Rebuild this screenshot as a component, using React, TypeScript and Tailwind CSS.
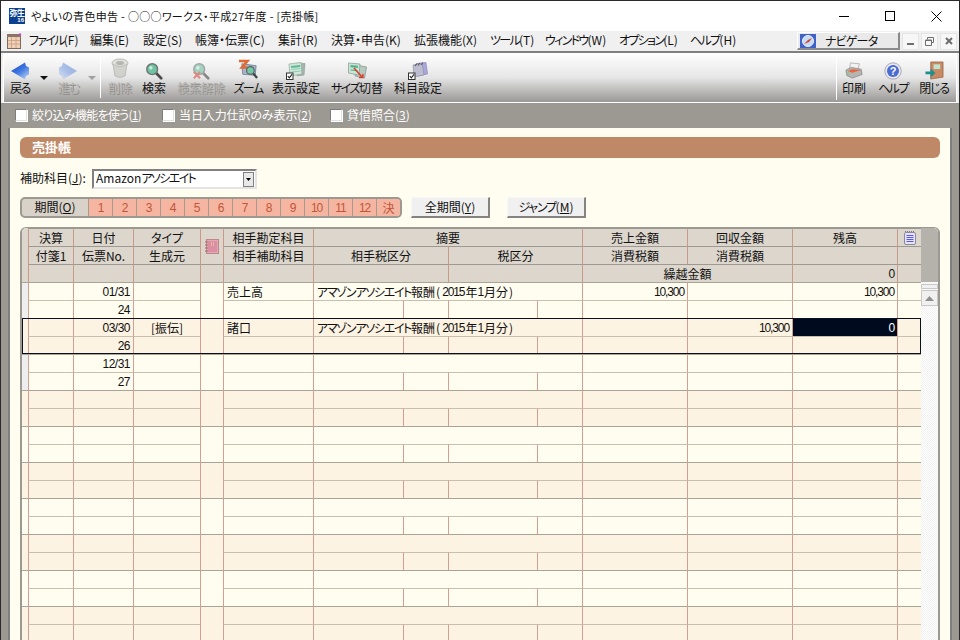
import React from "react";

const U = ({ children }: { children: React.ReactNode }) => <span className="underline">{children}</span>;
const K = ({ children }: { children: React.ReactNode }) => <span className="tracking-[-1.3px]">{children}</span>;
const M = ({ children }: { children: React.ReactNode }) => <span className="tracking-[-1.7px]">{children}</span>;

function Logo() {
  return (
    <div className="w-4 h-4 bg-[#0b3f8f] flex flex-col items-center justify-start leading-none text-white overflow-hidden">
      <span className="text-[8px] leading-[9px] tracking-[-0.5px] font-bold">弥生</span>
      <span className="text-[6px] leading-[7px] self-end pr-[1px] font-['Liberation_Sans',sans-serif] font-bold">16</span>
    </div>
  );
}

function BackIcon({ off }: { off?: boolean }) {
  return (
    <svg width="18" height="18" viewBox="0 0 18 18" className={off ? "opacity-40 -scale-x-100" : ""}>
      <defs>
        <linearGradient id={off ? "ag2" : "ag"} x1="0.1" y1="0" x2="0.9" y2="1">
          <stop offset="0" stopColor="#1a44c4" />
          <stop offset="0.5" stopColor="#3f78e2" />
          <stop offset="1" stopColor="#bcd4f6" />
        </linearGradient>
      </defs>
      <path d="M0 9 L14 0.5 L15 4 L18 5.5 L18 12.5 L15 14 L14 17.5Z" fill={`url(#${off ? "ag2" : "ag"})`} />
    </svg>
  );
}

function Caret({ off }: { off?: boolean }) {
  return (
    <svg width="8" height="4" viewBox="0 0 8 4" className="mt-[23px]">
      <path d="M0 0H8L4 4Z" fill={off ? "#9f9f9f" : "#111"} />
    </svg>
  );
}

function TrashIcon() {
  return (
    <svg width="20" height="22" viewBox="0 0 20 22" className="opacity-70">
      <ellipse cx="10" cy="5" rx="8" ry="4" fill="#d7d7d2" stroke="#a3a39d" />
      <path d="M3 6 L5 18 Q10 21 15 18 L17 6 Q10 11 3 6Z" fill="#c6c6c0" stroke="#a8a8a2" />
      <ellipse cx="10" cy="5" rx="4" ry="2" fill="#9b9b96" />
    </svg>
  );
}

function Magnifier({ off }: { off?: boolean }) {
  return (
    <svg width="18" height="18" viewBox="0 0 20 20" className={off ? "opacity-60" : ""}>
      <path d="M12 12 L18 18" stroke="#4a4a4a" strokeWidth="3" strokeLinecap="round" />
      <circle cx="8" cy="8" r="6" fill="#6fc3a3" stroke="#6d7773" strokeWidth="1.6" />
      <circle cx="6.5" cy="6.5" r="2" fill="#c7ecdc" />
      {off && <path d="M2 11 L9 18 M9 11 L2 18" stroke="#d84a3a" strokeWidth="2.2" />}
    </svg>
  );
}

function ZoomIcon() {
  return (
    <svg width="21" height="21" viewBox="0 0 22 22">
      <path d="M4 5 L19 7 L18 17 L5 16Z" fill="#aab4c8" stroke="#7f88a0" />
      <path d="M1 2 H10 L4 9 H10" fill="none" stroke="#e06a35" strokeWidth="2.6" />
      <path d="M15 14 L20 20" stroke="#3e4a46" strokeWidth="2.4" />
      <circle cx="13" cy="12" r="4" fill="#74c8a8" stroke="#55625e" strokeWidth="1.2" />
    </svg>
  );
}

function CardIcon() {
  return (
    <svg width="20" height="18" viewBox="0 0 20 18">
      <path d="M11 1 L19 1.5 L18 13 L11 14Z" fill="#a6b4ad" stroke="#8a9a92" strokeWidth="0.6" />
      <path d="M3 2 L15 0.5 L16 12 L4 14Z" fill="#cfe8da" stroke="#93a99c" strokeWidth="0.7" />
      <path d="M5 4 L14 3 L14.2 5 L5.2 6Z" fill="#5fb895" />
      <path d="M5.4 7.5 L14.4 6.5 M5.6 10 L14.6 9" stroke="#8fcdb2" strokeWidth="1.2" />
      <rect x="0.5" y="11" width="6.5" height="6.5" fill="#fff" stroke="#333" />
      <path d="M1.8 14 L3.3 15.8 L6 12.4" fill="none" stroke="#222" strokeWidth="1.1" />
    </svg>
  );
}

function SizeIcon() {
  return (
    <svg width="19" height="18" viewBox="0 0 19 18">
      <path d="M8 3 L18.5 5 L16.5 16 L7 14Z" fill="#b8cabf" stroke="#7d8f85" strokeWidth="0.7" />
      <path d="M0.5 1 L12 2 L11 13 L0.5 11Z" fill="#c9e6d6" stroke="#7d9a8c" strokeWidth="0.7" />
      <path d="M2.5 3 L10 3.7 L9.7 6 L2.5 5.3Z" fill="#55b08c" />
      <path d="M2.5 8 L9.5 8.6" stroke="#55b08c" strokeWidth="1.2" />
      <path d="M6 6 L14 15 M11 15.6 H14.8 V12" fill="none" stroke="#d8402c" strokeWidth="1.5" />
    </svg>
  );
}

function SubjectIcon() {
  return (
    <svg width="20" height="18" viewBox="0 0 20 18">
      <path d="M9 1.5 L18 0.5 L19.5 12 L10 14Z" fill="#a9a6dc" stroke="#8582b0" strokeWidth="0.6" />
      <path d="M5 3 L14 1 L16 13 L6 15Z" fill="#bdbcd0" stroke="#8a8a9a" strokeWidth="0.6" />
      <path d="M7 4 L9 1.5 M10 3.5 L12 1 M13 3 L15 0.5" stroke="#55555f" strokeWidth="1.1" />
      <rect x="0.5" y="11" width="6.5" height="6.5" fill="#fff" stroke="#333" />
      <path d="M1.8 14 L3.3 15.8 L6 12.4" fill="none" stroke="#222" strokeWidth="1.1" />
    </svg>
  );
}

function PrintIcon() {
  return (
    <svg width="20" height="18" viewBox="0 0 22 20">
      <path d="M7 1 L17 2 L15 9 L6 8Z" fill="#f2f2f2" stroke="#9a9a9a" strokeWidth="0.7" />
      <path d="M2 9 L8 6 L19 8 L20 14 L9 18 L3 15Z" fill="#b5b5b5" stroke="#7a7a7a" strokeWidth="0.7" />
      <path d="M4 10 L9 12 L19 9 L9 8Z" fill="#e8663d" />
      <circle cx="4.5" cy="13" r="1.2" fill="#7fd36d" />
    </svg>
  );
}

function HelpIcon() {
  return (
    <svg width="18" height="18" viewBox="0 0 18 18">
      <circle cx="9" cy="9" r="8.2" fill="#e8e8f0" stroke="#9a9aa8" strokeWidth="0.8" />
      <circle cx="9" cy="9" r="6" fill="#4a6bd0" />
      <text x="9" y="13" textAnchor="middle" fontSize="11" fontWeight="700" fill="#fff" fontFamily="Liberation Sans">?</text>
    </svg>
  );
}

function CloseIcon() {
  return (
    <svg width="19" height="19" viewBox="0 0 20 20">
      <path d="M6 1 H19 V17 L6 19Z" fill="#c98a62" stroke="#8c5c3e" strokeWidth="0.7" />
      <rect x="9" y="3.5" width="7" height="5" fill="#bfe3cf" />
      <path d="M0.5 11 H6 V8 L11 12.5 L6 17 V14 H0.5Z" fill="#1d8f8f" />
    </svg>
  );
}

function BookIcon() {
  return (
    <svg width="14" height="15" viewBox="0 0 14 15">
      <rect x="1.5" y="0.5" width="12" height="14" fill="#e6a9b4" stroke="#b98a8a" />
      <rect x="3" y="2" width="9" height="11" fill="#dc8fa4" />
      <path d="M0 3 H3 M0 6 H3 M0 9 H3 M0 12 H3" stroke="#9e6b6b" />
      <path d="M6 4 H10 M6 6 H10" stroke="#f4e08a" strokeDasharray="1 1" />
    </svg>
  );
}

function NoteIcon() {
  return (
    <svg width="12" height="14" viewBox="0 0 12 14">
      <rect x="0.5" y="1.5" width="11" height="12" rx="1.5" fill="#e6e2fb" stroke="#8a8a98" />
      <path d="M1 0.5 H11" stroke="#777" strokeDasharray="1 1" />
      <path d="M2.5 4.5 H9.5 M2.5 6.5 H9.5 M2.5 8.5 H9.5 M2.5 10.5 H9.5" stroke="#5a5ae0" />
    </svg>
  );
}

function NavIcon() {
  return (
    <svg width="16" height="14" viewBox="0 0 16 14">
      <rect width="16" height="14" fill="#3f62c8" />
      <circle cx="8" cy="7" r="5.5" fill="#c4dcf4" stroke="#eaf2fb" />
      <path d="M4 10 L8 6 L12 4 L9 8Z" fill="#d8402c" />
    </svg>
  );
}

function MenuIcon() {
  return (
    <svg width="16" height="16" viewBox="0 0 16 16">
      <rect x="1.5" y="1.5" width="13" height="14" fill="#ecd3b8" stroke="#7d6a58" />
      <rect x="1" y="1" width="14" height="3" fill="#8a7466" />
      <path d="M5.5 4 V15 M10 4 V15 M2 7.5 H14 M2 11 H14" stroke="#cf9a80" strokeWidth="0.8" />
      <circle cx="14" cy="1.5" r="1.2" fill="#c04ec0" />
    </svg>
  );
}

function Tool({ w, label, off, children }: { w: string; label: React.ReactNode; off?: boolean; children: React.ReactNode }) {
  return (
    <div className={`${w} shrink-0 flex flex-col items-center`}>
      <div className="h-[27px] flex items-end justify-center">{children}</div>
      <div className={`text-[12px] leading-[15px] whitespace-nowrap ${off ? "text-[#b4b2ae] [text-shadow:1px_1px_0_#8f8d8a]" : "text-[#101010]"}`}>
        {label}
      </div>
    </div>
  );
}

function Check({ w, label }: { w: string; label: React.ReactNode }) {
  return (
    <div className={`${w} shrink-0 flex items-center`}>
      <div className="w-3 h-3 -ml-px bg-white border border-t-[#7d7d7d] border-l-[#7d7d7d] border-r-[#e0e0e0] border-b-[#e0e0e0] shadow-[1px_1px_0_#fff]" />
      <span className="ml-[5px] text-white text-[12px] whitespace-nowrap">{label}</span>
    </div>
  );
}

function Btn({ ml, children }: { ml: string; children: React.ReactNode }) {
  return (
    <div className={`${ml} w-[79px] bg-[#f0f0f0] border border-t-[#f8f8f8] border-l-[#f8f8f8] border-r-2 border-b-2 border-r-[#85837f] border-b-[#85837f] flex items-center justify-center whitespace-nowrap pb-[1px]`}>
      {children}
    </div>
  );
}

const GRID =
  "grid grid-cols-[6px_45px_60px_67px_23px_90px_90px_45px_89px_45px_105px_105px_105px_24px]";

function H({ span, cls, children }: { span?: string; cls?: string; children?: React.ReactNode }) {
  return (
    <div className={`${span ?? ""} ${cls ?? "justify-center"} border-l border-t border-l-[#c9998c] border-t-[#9c9892] flex items-center whitespace-nowrap`}>
      {children}
    </div>
  );
}

function D({ span, top, cls, children }: { span?: string; top?: boolean; cls?: string; children?: React.ReactNode }) {
  return (
    <div
      className={`${span ?? ""} ${cls ?? ""} border-l border-t border-l-[#d29f92] ${top ? "border-t-[#a8a498]" : "border-t-[#c8bfb0]"} flex items-center whitespace-nowrap overflow-hidden`}
    >
      {children}
    </div>
  );
}

const Num = ({ children }: { children: React.ReactNode }) => (
  <span className="font-['Liberation_Sans',sans-serif] text-[12px] tracking-[-1.1px]">{children}</span>
);
const DateNum = ({ children }: { children: React.ReactNode }) => (
  <span className="font-['Liberation_Sans',sans-serif] text-[12px] tracking-[-0.5px]">{children}</span>
);

const SUM = (
  <>
    <K>アマゾンアソシエイト</K>報酬<span className="ml-[1px] mr-[2px]">(</span><Num>2015</Num><span className="ml-[1px]">年</span><Num>1</Num><span className="ml-[1px]">月分</span><span className="ml-[1px]">)</span>
  </>
);

const rows = [
  { date: "01/31", no: "24", type: "", acc: "売上高", sum: true, sales: "10,300", coll: "", bal: "10,300", gutter: "bg-[#eeeeee]" },
  { date: "03/30", no: "26", type: "[振伝]", acc: "諸口", sum: true, sales: "", coll: "10,300", bal: "0", sel: true },
  { date: "12/31", no: "27", type: "", acc: "", sum: false, sales: "", coll: "", bal: "", gutter: "bg-[#eeeeee]" },
  ...Array.from({ length: 7 }, () => ({ date: "", no: "", type: "", acc: "", sum: false, sales: "", coll: "", bal: "" })),
];

const R = "justify-end pr-[3px]";

function Group({ r, i }: { r: any; i: number }) {
  const band = i % 2 === 1 ? "bg-[#fdf3e2]" : "bg-[#fffdf0]";
  return (
    <div className={`relative ${GRID} grid-rows-[18px_18px] ${band}`}>
      <div className={`row-span-2 border-t border-t-[#a8a498] ${r.gutter ?? ""}`} />
      <D top />
      <D top cls={R}><DateNum>{r.date}</DateNum></D>
      <D top cls="justify-center">{r.type}</D>
      <D top span="row-span-2" />
      <D top cls="pl-[3px]">{r.acc}</D>
      <D top span="col-span-4" cls="pl-[3px]">{r.sum ? SUM : null}</D>
      <D top cls={R}><Num>{r.sales}</Num></D>
      <D top cls={R}><Num>{r.coll}</Num></D>
      <D top cls={`${R} ${r.sel ? "bg-[#000a1e] text-white" : ""}`}><Num>{r.bal}</Num></D>
      <D top />
      <D />
      <D cls={R}><DateNum>{r.no}</DateNum></D>
      <D />
      <D />
      <D />
      <D />
      <D />
      <D />
      <D />
      <D />
      <D />
      <D />
      {r.sel && <div className="absolute inset-0 border border-[#0a1020] pointer-events-none" />}
    </div>
  );
}

function MenuItem({ w, children }: { w: string; children: React.ReactNode }) {
  return <div className={`${w} shrink-0 whitespace-nowrap pb-[2px]`}>{children}</div>;
}

export default function App() {
  return (
    <div className="w-[960px] h-[640px] overflow-hidden flex flex-col bg-[#9c9892] border-x border-t border-[#2a2a2a] font-['Noto_Sans_CJK_JP',sans-serif] text-[12px] text-[#111] [font-feature-settings:'palt']">
      {/* title bar */}
      <div className="h-[30px] shrink-0 bg-white flex items-center">
        <div className="ml-[8px] -mt-[1px]"><Logo /></div>
        <div className="ml-[6px] text-[11px] tracking-[0.3px] whitespace-nowrap">やよいの青色申告 - ○○○ワークス・平成27年度 - [売掛帳]</div>
        <div className="ml-auto flex h-full">
          <div className="w-[46px] flex items-center justify-center"><div className="w-[10px] h-px bg-black" /></div>
          <div className="w-[46px] flex items-center justify-center"><div className="w-[10px] h-[10px] border border-black" /></div>
          <div className="w-[46px] flex items-center justify-center">
            <svg width="11" height="11" viewBox="0 0 11 11"><path d="M0.5 0.5 L10.5 10.5 M10.5 0.5 L0.5 10.5" stroke="#000" /></svg>
          </div>
        </div>
      </div>
      {/* menu bar */}
      <div className="h-[20px] shrink-0 bg-[#f0f0f0] flex items-center">
        <div className="ml-[5px] w-[23px]"><MenuIcon /></div>
        <MenuItem w="w-[61px]"><M>ファイル</M>(F)</MenuItem>
        <MenuItem w="w-[53px]">編集(E)</MenuItem>
        <MenuItem w="w-[52px]">設定(S)</MenuItem>
        <MenuItem w="w-[83px]">帳簿・伝票(C)</MenuItem>
        <MenuItem w="w-[53px]">集計(R)</MenuItem>
        <MenuItem w="w-[83px]">決算・申告(K)</MenuItem>
        <MenuItem w="w-[76px]">拡張機能(X)</MenuItem>
        <MenuItem w="w-[55px]"><M>ツール</M>(T)</MenuItem>
        <MenuItem w="w-[74px]"><M>ウィンドウ</M>(W)</MenuItem>
        <MenuItem w="w-[71px]"><M>オプション</M>(L)</MenuItem>
        <MenuItem w="w-[70px]"><M>ヘルプ</M>(H)</MenuItem>
        <div className="ml-auto flex items-center">
          <div className="w-[103px] h-[18px] bg-[#e9e9e9] border-t border-l border-t-white border-l-white border-r-2 border-b-2 border-r-[#8a8a8a] border-b-[#8a8a8a] flex items-center">
            <div className="ml-[2px]"><NavIcon /></div>
            <span className="ml-[9px] tracking-[-0.8px]">ナビゲータ</span>
          </div>
          <div className="ml-[2px] w-[17px] h-[17px] bg-[#f7f7f7] border border-[#e4e4e4] flex items-end justify-center pb-[4px]"><div className="w-[7px] h-[2px] bg-[#6e6e6e]" /></div>
          <div className="ml-[2px] w-[17px] h-[17px] bg-[#f7f7f7] border border-[#e4e4e4] flex items-center justify-center">
            <svg width="9" height="9" viewBox="0 0 9 9"><path d="M2.5 2.5 V0.5 H8.5 V5.5 H6.5 M0.5 3 H6.5 V8.5 H0.5Z M0.5 3.5 H6.5" fill="none" stroke="#6e6e6e" /></svg>
          </div>
          <div className="ml-[2px] w-[17px] h-[17px] bg-[#f7f7f7] border border-[#e4e4e4] flex items-center justify-center">
            <svg width="8" height="8" viewBox="0 0 8 8"><path d="M1 1 L7 7 M7 1 L1 7" stroke="#6e6e6e" strokeWidth="2" /></svg>
          </div>
          <div className="w-[2px]" />
        </div>
      </div>
      {/* toolbar */}
      <div className="h-[2px] shrink-0 bg-[#7f7f7f]" />
      <div className="h-[50px] shrink-0 bg-[#ededed] px-[2px]">
        <div className="h-full flex border-l border-r border-b border-white bg-gradient-to-b from-white via-[#e6e6e6] to-[#9b9997]">
          <Tool w="w-[32px]" label={<span className="tracking-[-1.5px]">戻る</span>}><BackIcon /></Tool>
          <div className="w-[16px] shrink-0 flex justify-center"><Caret /></div>
          <Tool w="w-[32px]" label={<span className="tracking-[-1.5px]">進む</span>} off><BackIcon off /></Tool>
          <div className="w-[16px] shrink-0 flex justify-center"><Caret off /></div>
          <div className="w-px shrink-0 bg-white my-[4px]" />
          <Tool w="w-[38px]" label="削除" off><TrashIcon /></Tool>
          <Tool w="w-[30px]" label="検索"><Magnifier /></Tool>
          <Tool w="w-[64px]" label="検索解除" off><Magnifier off /></Tool>
          <Tool w="w-[30px]" label={<span className="tracking-[-1.5px]">ズーム</span>}><ZoomIcon /></Tool>
          <Tool w="w-[66px]" label="表示設定"><CardIcon /></Tool>
          <Tool w="w-[56px]" label={<><span className="tracking-[-1.5px]">サイズ</span>切替</>}><SizeIcon /></Tool>
          <Tool w="w-[66px]" label="科目設定"><SubjectIcon /></Tool>
          <div className="flex-1" />
          <div className="w-px shrink-0 bg-white my-[2px]" />
          <Tool w="w-[34px]" label="印刷"><PrintIcon /></Tool>
          <Tool w="w-[44px]" label={<span className="tracking-[-1.5px]">ヘルプ</span>}><HelpIcon /></Tool>
          <Tool w="w-[38px]" label={<span className="tracking-[-1.3px]">閉じる</span>}><CloseIcon /></Tool>
          <div className="w-[3px] shrink-0" />
        </div>
      </div>
      {/* options */}
      <div className="h-[25px] shrink-0 bg-[#9c9892] flex items-center pl-[15px] pb-[1px]">
        <Check w="w-[147px]" label={<span className="tracking-[-0.7px]">絞り込み機能を使う(<U>1</U>)</span>} />
        <Check w="w-[168px]" label={<span className="tracking-[-0.1px]">当日入力仕訳のみ表示(<U>2</U>)</span>} />
        <Check w="w-[90px]" label={<>貸借照合(<U>3</U>)</>} />
      </div>
      {/* panel */}
      <div className="flex-1 min-h-0 ml-[7px] mr-[7px] border-x-2 border-[#7f7f7f] bg-[#fffdf0] px-[10px] pt-[9px] flex flex-col">
        <div className="h-[21px] shrink-0 rounded-[6px] bg-[#bf8968] text-white font-bold text-[13px] pl-[12px] pb-[2px] flex items-center">売掛帳</div>
        <div className="mt-[11px] h-[20px] shrink-0 flex items-center">
          <div className="w-[72px] whitespace-nowrap pb-[2px]">補助科目(<U>J</U>):</div>
          <div className="w-[165px] h-[20px] bg-white border-2 border-t-[#808080] border-l-[#808080] border-r-[#e4e4e4] border-b-[#e4e4e4] flex items-center pl-[2px] pr-[1px]">
            <span className="flex-1 whitespace-nowrap pb-[2px]">Amazon<span className="tracking-[-1.6px]">アソシエイト</span></span>
            <div className="w-[11px] h-[15px] bg-[#e8e8e8] border border-[#808080] flex items-center justify-center">
              <svg width="5" height="3" viewBox="0 0 5 3"><path d="M0 0H5L2.5 3Z" fill="#000" /></svg>
            </div>
          </div>
        </div>
        <div className="mt-[8px] h-[21px] shrink-0 flex">
          <div className="w-[382px] border-2 border-[#9c9892] rounded-[5px] flex overflow-hidden bg-[#d8d2c8]">
            <div className="w-[66px] flex items-center justify-center whitespace-nowrap pb-[1px]">期間(<U>O</U>)</div>
            {["1", "2", "3", "4", "5", "6", "7", "8", "9", "10", "11", "12", "決"].map((m) => (
              <div key={m} className="w-[24px] border-l border-[#a89a90] bg-[#f5b5a0] text-[#c0553a] flex items-center justify-center">
                {m === "決" ? m : <Num>{m}</Num>}
              </div>
            ))}
          </div>
          <Btn ml="ml-[9px]">全期間(<U>Y</U>)</Btn>
          <Btn ml="ml-[17px]"><K>ジャンプ</K>(<U>M</U>)</Btn>
        </div>
        {/* table */}
        <div className="mt-[9px] flex-1 min-h-0 border-x-2 border-t border-[#9c9892] rounded-t-[6px] overflow-hidden flex">
          <div className="w-[899px] shrink-0">
            <div className={`${GRID} grid-rows-[18px_18px_18px] bg-[#dcd6cd]`}>
              <div className="row-span-3" />
              <H>決算</H>
              <H>日付</H>
              <H>タイプ</H>
              <H span="row-span-2"><BookIcon /></H>
              <H>相手勘定科目</H>
              <H span="col-span-4">摘要</H>
              <H>売上金額</H>
              <H>回収金額</H>
              <H>残高</H>
              <H><NoteIcon /></H>
              <H>付箋1</H>
              <H>伝票No.</H>
              <H>生成元</H>
              <H>相手補助科目</H>
              <H span="col-span-2">相手税区分</H>
              <H span="col-span-2">税区分</H>
              <H>消費税額</H>
              <H>消費税額</H>
              <H />
              <H />
              <H />
              <H />
              <H />
              <H />
              <H />
              <H span="col-span-2" />
              <H span="col-span-2" />
              <H span="col-span-2">繰越金額</H>
              <H cls="justify-end pr-[3px]"><Num>0</Num></H>
              <H />
            </div>
            {rows.map((r, i) => (
              <Group key={i} r={r} i={i} />
            ))}
          </div>
          <div className="w-[17px] shrink-0 flex flex-col bg-[repeating-conic-gradient(#f1f1f1_0_25%,#ffffff_0_50%)] bg-[length:2px_2px]">
            <div className="h-[54px] bg-[#b5b2ab]" />
            <div className="mt-[2px] h-[5px] bg-[#f0f0f0] border border-[#c8c8c8]" />
            <div className="mt-px h-[16px] bg-[#f0f0f0] border border-[#c8c8c8] flex items-center justify-center">
              <svg width="9" height="5" viewBox="0 0 9 5"><path d="M0 5H9L4.5 0Z" fill="#8f8f8f" /></svg>
            </div>
          </div>
        </div>
      </div>
    </div>
  );
}
